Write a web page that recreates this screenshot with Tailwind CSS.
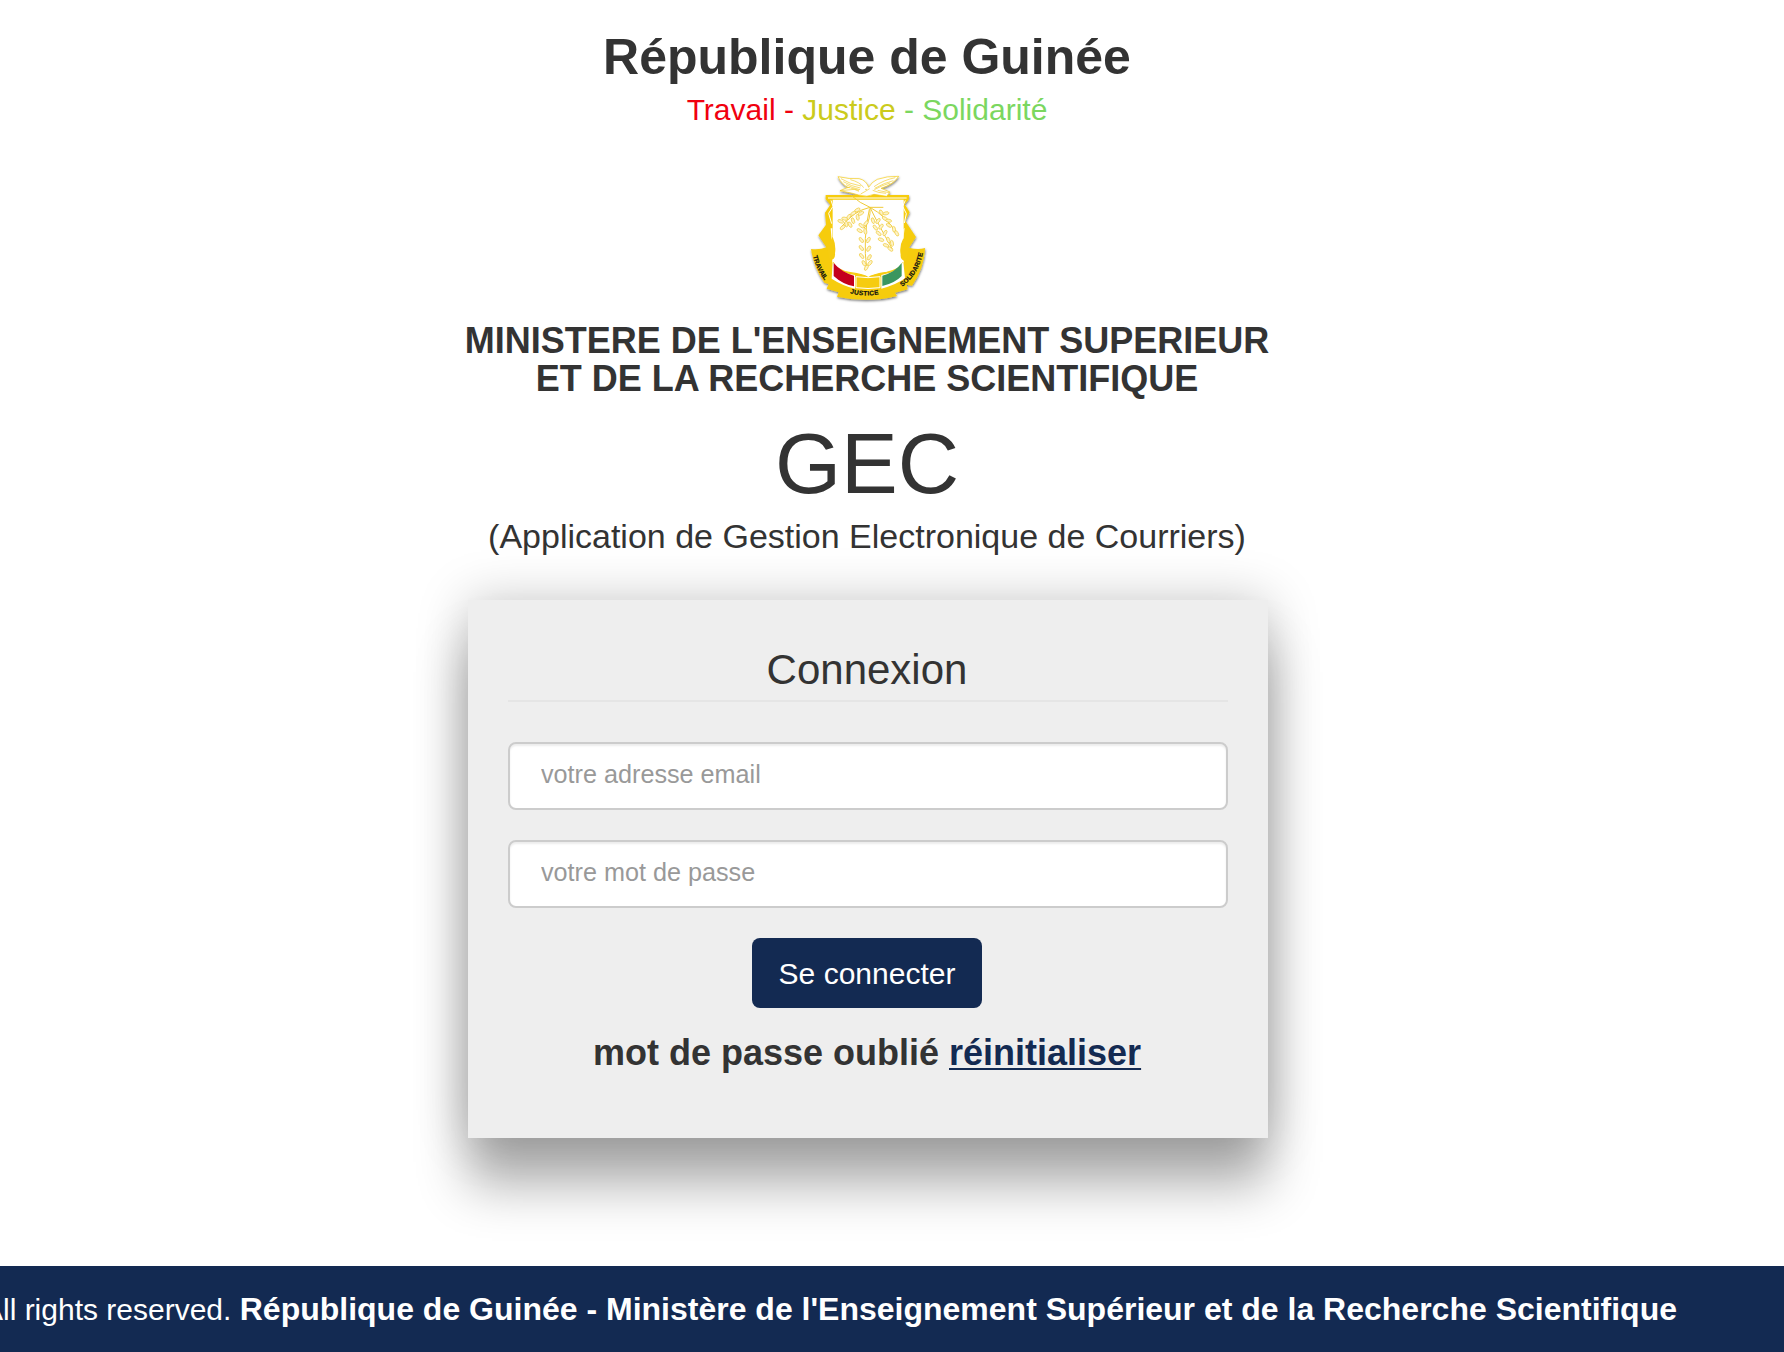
<!DOCTYPE html>
<html lang="fr">
<head>
<meta charset="utf-8">
<title>GEC - Connexion</title>
<script src="https://cdn.jsdelivr.net/npm/@tailwindcss/browser@4"></script>
</head>
<body class="bg-white font-['Liberation_Sans',Arial,sans-serif] text-[#333]">
<div class="flex h-[1352px] w-[1784px] flex-col overflow-hidden">
  <main class="ml-[468px] flex w-[800px] grow flex-col items-center pt-[29px] text-center whitespace-nowrap">
    <h1 class="mr-0.5 text-[50px] leading-[56px] font-bold">République de Guinée</h1>
    <p class="mt-1 mr-0.5 text-[30px] leading-[42px] text-[#7bd75f]"><span class="text-[#f0000f]">Travail - </span><span class="text-[#cbcb1c]">Justice</span> - Solidarité</p>

    <svg class="mt-[29px] h-[150px] w-[160px] shrink-0" viewBox="-6 0 480 450" fill="none" aria-label="Armoiries">
      <defs>
        <filter id="sh" x="-10%" y="-10%" width="120%" height="125%"><feDropShadow dx="1" dy="4" stdDeviation="2.5" flood-color="#000" flood-opacity=".55"/></filter>
        <path id="t1" d="M69 288Q80 335 112 370"/>
        <path id="t2" d="M180 400Q230 413 280 400"/>
        <path id="t3" d="M337 380Q390 340 400 270"/>
      </defs>
      <g filter="url(#sh)">
        <path fill="#f6cc10" d="M107 105H357V118L344 133L359 157L346 183L378 231L357 263Q384 271 405 264Q403 325 366 377L350 374L353 388L315 398L321 408Q232 430 141 410L146 397L110 386L116 372L103 368Q72 326 63 267Q90 270 109 262L85 226L108 194L105 158L121 134L107 118Z"/>
        <path fill="#fff" stroke="#f6cc10" stroke-width="2" d="M150 92Q185 77 178 84Q157 76 144 50Q180 58 207 56Q228 60 236 82Q245 66 262 58Q290 48 326 49Q311 73 273 85L300 96L290 109L252 103Q232 113 206 105L184 99Z"/>
      </g>
      <path fill="#fff" d="M128 119H341V307Q332 329 290 337Q248 343 235 353Q222 343 181 338Q138 332 128 308Z"/>
      <path stroke="#fff" stroke-width="3" d="M114 114H350M123 121L129 139L116 160L125 191M346 121L338 139L349 161L343 189"/>
      <path fill="#fff" d="M122 205L126 253L137 296Q128 305 127 309V205ZM344 203L339 246L328 292L340 309V208Z"/>
      <path fill="#f6cc10" d="M128 230Q139 255 135 280Q137 300 118 301L112 262ZM340 235Q327 259 332 284Q330 301 349 304L357 263Z"/>
      <path stroke="#f6cc10" stroke-width="4" d="M129 307Q138 332 181 338Q222 343 235 353Q248 343 290 337Q332 329 340 307"/>
      <path fill="#fff" d="M128 306Q150 340 195 345V386Q157 377 125 356ZM340 306Q318 339 274 345V386Q318 375 345 355Z"/>
      <path fill="#c4001d" d="M131 309Q155 337 192 347V379Q158 373 131 348Z"/>
      <path fill="#f6cc10" stroke="#fff" stroke-width="3" d="M198 350Q234 356 270 350V383Q234 388 198 383Z"/>
      <path fill="#3a965f" d="M335 309Q315 337 277 347V378Q315 369 335 348Z"/>
      <path stroke="#f2cb2c" stroke-width="2" d="M153 56Q178 72 213 78M160 65Q184 79 211 84M168 74Q188 84 210 89M181 59Q210 66 221 83M316 53Q280 60 252 80M310 62Q284 68 254 85M300 69Q276 76 253 89M151 92L193 88L207 94M181 84L207 91M239 86Q225 95 212 102M248 91Q265 99 288 100M263 91L297 98"/>
      <circle cx="228" cy="88" r="2" fill="#e4bc18"/>
      <g id="branches" stroke="#f0cb3a" stroke-width="2">
        <path stroke-width="3" d="M183 106Q210 130 240 142H280M240 142Q190 153 155 200M240 142Q243 180 222 205M238 148Q218 235 230 325M240 142Q263 190 307 267M240 142Q286 166 322 222"/>
      </g>
      <g fill="#111" stroke="#111" stroke-width=".6" class="font-['Liberation_Sans',Arial,sans-serif] font-bold" font-size="19.5">
        <text><textPath href="#t1">TRAVAIL</textPath></text>
        <text letter-spacing=".8"><textPath href="#t2">JUSTICE</textPath></text>
        <text letter-spacing=".3"><textPath href="#t3">SOLIDARITE</textPath></text>
      </g>
    </svg>

    <h2 class="mt-3 mr-0.5 text-[36px] leading-[38px] font-bold">MINISTERE DE L'ENSEIGNEMENT SUPERIEUR<br>ET DE LA RECHERCHE SCIENTIFIQUE</h2>
    <p class="mt-[21px] mr-0.5 text-[85px] leading-[90px]">GEC</p>
    <p class="mt-[3px] mr-0.5 text-[34px] leading-[48px]">(Application de Gestion Electronique de Courriers)</p>

    <form class="mt-10 flex h-[538px] w-full shrink-0 flex-col items-center bg-[#eee] px-10 pt-10 shadow-[0_0_48px_rgba(0,0,0,0.22),0_48px_48px_rgba(0,0,0,0.3)]">
      <h3 class="w-full border-b-2 border-[#e5e5e5] pr-0.5 text-[42px] leading-[60px]">Connexion</h3>
      <input type="email" placeholder="votre adresse email" class="mt-10 h-[68px] w-full rounded-lg border-2 border-[#ccc] bg-white px-[31px] pb-1 text-[25.2px] shadow-[inset_0_2px_2px_rgba(0,0,0,0.075)] placeholder:text-[#999]">
      <input type="password" placeholder="votre mot de passe" class="mt-[30px] h-[68px] w-full rounded-lg border-2 border-[#ccc] bg-white px-[31px] pb-1 text-[25.2px] shadow-[inset_0_2px_2px_rgba(0,0,0,0.075)] placeholder:text-[#999]">
      <button type="button" class="mt-[30px] mr-0.5 h-[70px] w-[230px] rounded-lg bg-[#132a52] text-[30px] text-white">Se connecter</button>
      <p class="mt-[25px] mr-0.5 text-[36px] leading-10 font-bold">mot de passe oublié <a href="#" class="text-[#132a52] underline decoration-2 underline-offset-[3px] [text-decoration-skip-ink:none]">réinitialiser</a></p>
    </form>
  </main>
  <footer class="relative flex h-[86px] shrink-0 items-center justify-end bg-[#132a52] pr-[107px] whitespace-nowrap text-white">
    <p class="text-[30px] leading-10">All rights reserved. <strong class="text-[32px]">République de Guinée - Ministère de l'Enseignement Supérieur et de la Recherche Scientifique</strong></p>
  </footer>
</div>
<script>
  // Olive leaves: x, y, angle
  const leaves = [
    [213,160,-30],[202,150,-30],[203,172,80],[190,160,-30],[189,182,70],[176,171,-60],[180,194,60],[164,176,10],[169,192,80],[152,184,20],[158,202,-40],
    [228,190,-50],[214,197,40],[226,214,80],[209,212,30],
    [235,240,-60],[214,240,50],[236,266,-60],[214,264,50],[238,292,-60],[215,288,50],[240,309,-50],[222,310,60],[229,323,-60],
    [249,182,70],[264,183,-50],[256,203,50],[273,200,-50],[266,220,40],[285,219,-60],[273,239,20],[295,240,70],[288,256,20],[306,250,80],[301,267,40],
    [274,158,60],[288,160,-10],[285,176,30],[296,182,10],[297,196,30],[312,208,80],[320,220,60]
  ];
  const g = document.getElementById('branches');
  for (const [x, y, a] of leaves) {
    const e = document.createElementNS('http://www.w3.org/2000/svg', 'ellipse');
    e.setAttribute('rx', 9); e.setAttribute('ry', 4.5);
    e.setAttribute('fill', '#fdf3c8');
    e.setAttribute('transform', `translate(${x} ${y}) rotate(${a})`);
    g.appendChild(e);
  }
</script>
</body>
</html>
